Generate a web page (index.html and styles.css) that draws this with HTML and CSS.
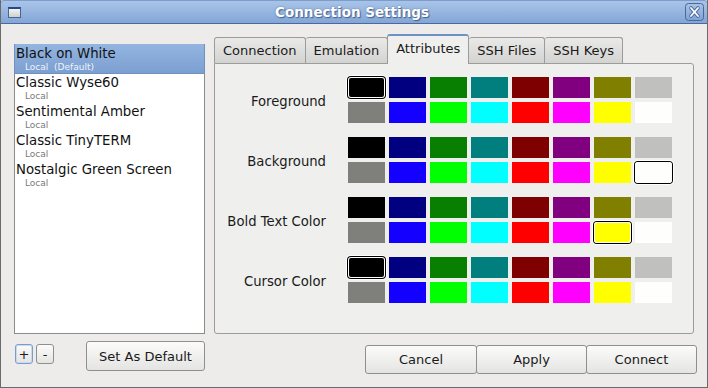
FILE: index.html
```html
<!DOCTYPE html>
<html>
<head>
<meta charset="utf-8">
<link rel="stylesheet" href="styles.css">
</head>
<body>
<div class="window">
  <div class="titlebar">
    <span class="win-icon"></span>
    <span class="title">Connection Settings</span>
    <span class="close">
      <svg width="19" height="18" viewBox="0 0 19 18">
        <defs>
          <linearGradient id="cg" x1="0" y1="0" x2="0" y2="1">
            <stop offset="0" stop-color="#a9c3e6"/>
            <stop offset="1" stop-color="#7fa2d4"/>
          </linearGradient>
        </defs>
        <rect x="0.5" y="0.5" width="18" height="17" rx="3" fill="url(#cg)" stroke="#48689a"/>
        <path d="M6 5 L13 13 M13 5 L6 13" stroke="#4a6a9c" stroke-width="3.6" stroke-linecap="round"/>
        <path d="M6 5 L13 13 M13 5 L6 13" stroke="#ffffff" stroke-width="1.8" stroke-linecap="round"/>
      </svg>
    </span>
  </div>
  <div class="body">
    <div class="left">
      <div class="list">
        <div class="item selected"><div class="name">Black on White</div><div class="sub">Local&nbsp;&nbsp;(Default)</div></div>
        <div class="item"><div class="name">Classic Wyse60</div><div class="sub">Local</div></div>
        <div class="item"><div class="name">Sentimental Amber</div><div class="sub">Local</div></div>
        <div class="item"><div class="name">Classic TinyTERM</div><div class="sub">Local</div></div>
        <div class="item"><div class="name">Nostalgic Green Screen</div><div class="sub">Local</div></div>
      </div>
      <div class="left-actions">
        <span class="btn small focus">+</span>
        <span class="btn small">-</span>
        <span class="btn default-btn">Set As Default</span>
      </div>
    </div>
    <div class="right">
      <div class="tabs">
        <span class="tab">Connection</span>
        <span class="tab">Emulation</span>
        <span class="tab active">Attributes</span>
        <span class="tab">SSH Files</span>
        <span class="tab">SSH Keys</span>
      </div>
      <div class="panel">
        <div class="group">
          <div class="label">Foreground</div>
          <div class="swatches">
            <span class="sw c0 sel"></span><span class="sw c1"></span><span class="sw c2"></span><span class="sw c3"></span><span class="sw c4"></span><span class="sw c5"></span><span class="sw c6"></span><span class="sw c7"></span>
            <span class="sw c8"></span><span class="sw c9"></span><span class="sw c10"></span><span class="sw c11"></span><span class="sw c12"></span><span class="sw c13"></span><span class="sw c14"></span><span class="sw c15"></span>
          </div>
        </div>
        <div class="group">
          <div class="label">Background</div>
          <div class="swatches">
            <span class="sw c0"></span><span class="sw c1"></span><span class="sw c2"></span><span class="sw c3"></span><span class="sw c4"></span><span class="sw c5"></span><span class="sw c6"></span><span class="sw c7"></span>
            <span class="sw c8"></span><span class="sw c9"></span><span class="sw c10"></span><span class="sw c11"></span><span class="sw c12"></span><span class="sw c13"></span><span class="sw c14"></span><span class="sw c15 sel"></span>
          </div>
        </div>
        <div class="group">
          <div class="label">Bold Text Color</div>
          <div class="swatches">
            <span class="sw c0"></span><span class="sw c1"></span><span class="sw c2"></span><span class="sw c3"></span><span class="sw c4"></span><span class="sw c5"></span><span class="sw c6"></span><span class="sw c7"></span>
            <span class="sw c8"></span><span class="sw c9"></span><span class="sw c10"></span><span class="sw c11"></span><span class="sw c12"></span><span class="sw c13"></span><span class="sw c14 sel"></span><span class="sw c15"></span>
          </div>
        </div>
        <div class="group">
          <div class="label">Cursor Color</div>
          <div class="swatches">
            <span class="sw c0 sel"></span><span class="sw c1"></span><span class="sw c2"></span><span class="sw c3"></span><span class="sw c4"></span><span class="sw c5"></span><span class="sw c6"></span><span class="sw c7"></span>
            <span class="sw c8"></span><span class="sw c9"></span><span class="sw c10"></span><span class="sw c11"></span><span class="sw c12"></span><span class="sw c13"></span><span class="sw c14"></span><span class="sw c15"></span>
          </div>
        </div>
      </div>
      <div class="actions">
        <span class="btn act w112">Cancel</span>
        <span class="btn act w110">Apply</span>
        <span class="btn act w110">Connect</span>
      </div>
    </div>
  </div>
</div>
</body>
</html>
```
FILE: styles.css
```css
* { box-sizing: border-box; }
html, body { margin: 0; padding: 0; }
body {
  font-family: "DejaVu Sans", "Liberation Sans", sans-serif;
  font-size: 13px;
  color: #1a1a1a;
  background: #edecea;
}
.window {
  width: 708px;
  height: 388px;
  background: #edecea;
  border: 1px solid #6b6b69;
  border-top: none;
  overflow: hidden;
}
.titlebar {
  height: 24px;
  margin: 0 -1px;
  background: linear-gradient(#a9c4e8, #83a6d7);
  border-bottom: 1px solid #4b6a9a;
  border-top: 1px solid #7d9ccb;
  border-left: 1px solid #6d8dbf;
  border-right: 1px solid #6d8dbf;
  border-radius: 4px 4px 0 0;
  display: flex;
  align-items: center;
  position: relative;
}
.win-icon {
  width: 13px;
  height: 11px;
  margin-left: 7px;
  margin-top: 1px;
  border: 1px solid #4b6591;
  border-top: 2px solid #24488a;
  background: linear-gradient(#f4f4f2, #cfcfcd);
}
.title {
  flex: 1;
  text-align: center;
  color: #ffffff;
  font-weight: bold;
  font-size: 13.5px;
  text-shadow: 1px 1px 1px #46618e, 0 0 2px #5d7cae;
  margin-left: -2px;
}
.close {
  width: 19px;
  height: 18px;
  margin-right: 3px;
  display: flex;
}
.body {
  display: flex;
  padding: 10px 10px 0 13px;
}
.left {
  width: 191px;
  margin-top: 10px;
  margin-right: 9px;
}
.list {
  height: 290px;
  background: #ffffff;
  border: 1px solid #8c8c8a;
}
.item {
  height: 29px;
  padding-left: 1px;
}
.item .name {
  line-height: 17px;
  font-size: 13.3px;
  color: #111;
}
.item .sub {
  line-height: 11px;
  font-size: 9px;
  color: #7a7a7a;
  padding-left: 9px;
}
.item.selected {
  background: linear-gradient(#93b5e0, #7c9fd1);
  margin: -1px -1px 0 -1px;
  padding-left: 1px;
  padding-top: 1px;
  height: 30px;
  border: 1px solid #6f91c2;
  border-top: none;
}
.item.selected .sub { color: #eef3fb; }
.left-actions {
  display: flex;
  align-items: flex-start;
  padding-top: 7px;
}
.btn {
  display: flex;
  align-items: center;
  justify-content: center;
  background: linear-gradient(#fbfbfa, #e4e4e2);
  border: 1px solid #8f8f8d;
  border-radius: 3px;
  font-size: 13px;
  color: #1a1a1a;
}
.btn.small {
  width: 18px;
  height: 20px;
  margin-top: 3px;
  font-size: 13px;
  line-height: 1;
}
.btn.small.focus {
  margin-left: 1px;
  margin-right: 3px;
  border-color: #7b9ccc;
  box-shadow: inset 0 0 0 1px #c9d9ef;
}
.btn.default-btn {
  width: 119px;
  height: 30px;
  margin-left: 32px;
}
.right {
  width: 483px;
}
.tabs {
  display: flex;
  align-items: flex-end;
  height: 29px;
  position: relative;
  z-index: 1;
}
.tab {
  height: 26px;
  padding: 0 8px;
  display: flex;
  align-items: center;
  background: linear-gradient(#e9e9e7, #d3d3d1);
  border: 1px solid #9b9b99;
  border-bottom: none;
  border-left: none;
  border-radius: 3px 3px 0 0;
  font-size: 13px;
  padding-bottom: 1px;
}
.tab:first-child { border-left: 1px solid #9b9b99; }
.tab.active {
  height: 30px;
  margin-bottom: -1px;
  background: #eff0ee;
  border: 1px solid #9b9b99;
  border-top: 2px solid #6f92c5;
  border-bottom: none;
  margin-left: -1px;
  padding: 0 8px 4px;
}
.tab.active + .tab { border-left: none; }
.panel {
  width: 480px;
  height: 271px;
  background: #eff0ee;
  border: 1px solid #9c9c9a;
  border-radius: 0 3px 3px 3px;
  padding-top: 13px;
}
.group {
  display: flex;
  align-items: center;
  height: 46px;
  margin-bottom: 14px;
}
.label {
  width: 111px;
  text-align: right;
  margin-right: 22px;
  font-size: 13.2px;
  padding-top: 3px;
}
.swatches {
  display: grid;
  grid-template-columns: repeat(8, 37px);
  grid-auto-rows: 21px;
  gap: 4px;
}
.sw { display: block; }
.sw.sel {
  border-radius: 3px;
  box-shadow: inset 0 0 0 1px #ffffff, 0 0 0 1px #000000, 0 0 0 2px #ffffff;
}
.c0 { background: #000000; }
.c1 { background: #000080; }
.c2 { background: #087f00; }
.c3 { background: #007f7e; }
.c4 { background: #7e0000; }
.c5 { background: #800080; }
.c6 { background: #807f00; }
.c7 { background: #c0c1be; }
.c8 { background: #7f807c; }
.c9 { background: #1400ff; }
.c10 { background: #00ff00; }
.c11 { background: #00ffff; }
.c12 { background: #ff0000; }
.c13 { background: #ff00ff; }
.c14 { background: #ffff00; }
.c15 { background: #fefffd; }
.actions {
  display: flex;
  justify-content: flex-end;
  margin-top: 11px;
}
.btn.act { height: 29px; }
.w112 { width: 112px; }
.w110 { width: 110px; }
.actions .btn + .btn { margin-left: -1px; width: 111px; }
```
